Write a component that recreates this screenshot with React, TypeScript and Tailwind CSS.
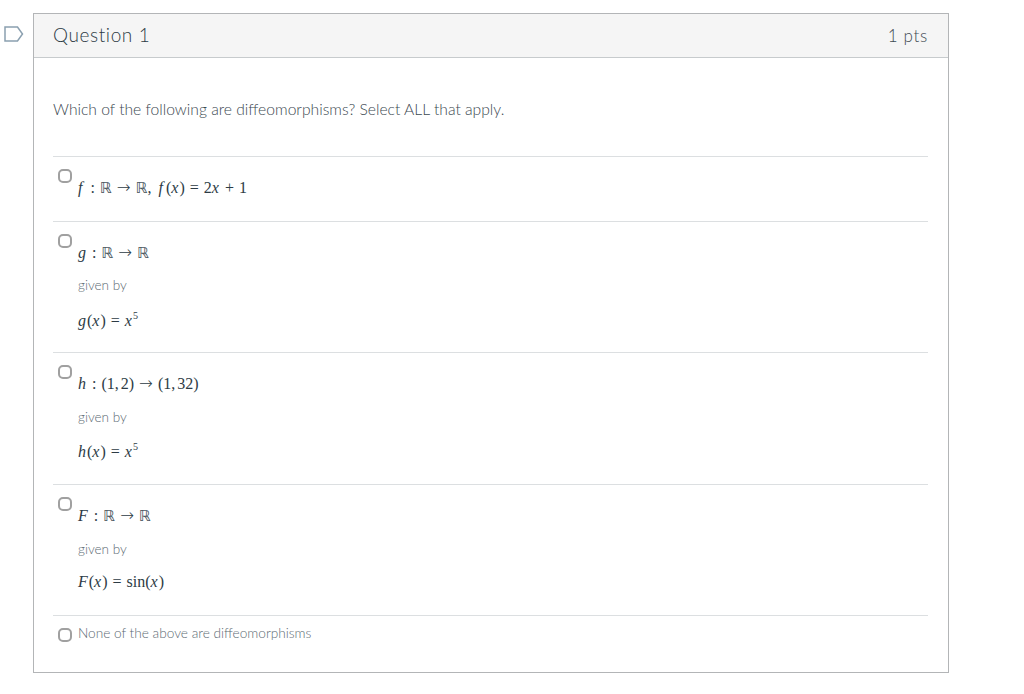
import React from "react";

const serif = "font-['Liberation_Serif',serif] text-[16px] leading-[18px] text-[#2d3b45] whitespace-pre";

function Box({ className }: { className: string }) {
  return <span className={"block w-[14px] h-[14px] shrink-0 rounded-[5px] border-2 border-[#a0a0a0] bg-white " + className} />;
}

function I({ children }: { children: React.ReactNode }) {
  return <i className="mr-[1px]">{children}</i>;
}

// relation with thick math spacing either side
function Rel({ children }: { children: React.ReactNode }) {
  return <span className="mx-[5px]">{children}</span>;
}

function Arrow() {
  return <span className="mx-[5px] font-['DejaVu_Sans',sans-serif] text-[16.5px] font-light">→</span>;
}

function Reals() {
  return <span className="font-['DejaVu_Sans',sans-serif] text-[15px] text-[#4a565e]">ℝ</span>;
}

function Comma() {
  return <span className="mr-[2px]">,</span>;
}

function Sup() {
  return <sup className="text-[10px] leading-none relative -top-[1px] align-super">5</sup>;
}

function Choice({
  first,
  rest,
  h,
  givenGap = "mt-[14px]",
  restGap = "mt-[16px]",
}: {
  first: React.ReactNode;
  rest?: React.ReactNode;
  h: string;
  givenGap?: string;
  restGap?: string;
}) {
  return (
    <div className={"border-t border-[#dcdfe1] pl-[5px] pt-[12px] flex " + h}>
      <Box className="mt-0" />
      <div className="ml-[6px] pt-[10px]">
        <div className={serif}>{first}</div>
        {rest && (
          <>
            <p className={"text-[13.5px] leading-[18px] font-light text-[#5c6a73] " + givenGap}>given by</p>
            <div className={serif + " " + restGap}>{rest}</div>
          </>
        )}
      </div>
    </div>
  );
}

export default function App() {
  return (
    <div className="w-[1024px] h-[694px] bg-white pt-[13px] flex font-['Lato',sans-serif] overflow-hidden">
      <div className="w-[33px] shrink-0 pt-[13px] pl-[4px]">
        <svg width="20" height="16" viewBox="0 0 20 16" fill="none" stroke="#8ba0b0" strokeWidth="1.5">
          <path d="M1 1h12.5l5 7-5 7H1z" />
        </svg>
      </div>
      <div className="w-[916px] h-[660px] border border-[#b3b5b7]">
        <div className="h-[44px] bg-[#f5f5f5] border-b border-[#c7cbcd] flex items-center justify-between pl-[19px] pr-[20px]">
          <h2 className="text-[19px] font-light tracking-[0.6px] text-[#2d3b45]">Question 1</h2>
          <span className="text-[17px] font-light tracking-[0.7px] text-[#3f4b53]">1 pts</span>
        </div>
        <div className="pl-[19px] pr-[20px]">
          <p className="text-[15.66px] leading-[20px] font-light text-[#3b4850] pt-[41px] pb-[37px]">
            Which of the following are diffeomorphisms? Select ALL that apply.
          </p>
          <Choice
            h="h-[65px]"
            first={
              <>
                <i className="mr-[3px]">f</i>
                <Rel>:</Rel>
                <Reals />
                <Arrow />
                <Reals />
                <span className="mr-[7px]">,</span>
                <i className="mr-[3px]">f</i>(<I>x</I>)<Rel>=</Rel>2<I>x</I>
                <Rel>+</Rel>1
              </>
            }
          />
          <Choice
            h="h-[131px]"
            restGap="mt-[18px]"
            first={
              <>
                <I>g</I>
                <Rel>:</Rel>
                <Reals />
                <Arrow />
                <Reals />
              </>
            }
            rest={
              <>
                <I>g</I>(<I>x</I>)<Rel>=</Rel>
                <I>x</I>
                <Sup />
              </>
            }
          />
          <Choice
            h="h-[132px]"
            givenGap="mt-[15px]"
            restGap="mt-[17px]"
            first={
              <>
                <I>h</I>
                <Rel>:</Rel>(1
                <Comma />
                2)
                <Arrow />
                (1
                <Comma />
                32)
              </>
            }
            rest={
              <>
                <I>h</I>(<I>x</I>)<Rel>=</Rel>
                <I>x</I>
                <Sup />
              </>
            }
          />
          <Choice
            h="h-[131px]"
            givenGap="mt-[15px]"
            restGap="mt-[15px]"
            first={
              <>
                <I>F</I>
                <Rel>:</Rel>
                <Reals />
                <Arrow />
                <Reals />
              </>
            }
            rest={
              <>
                <I>F</I>(<I>x</I>)<Rel>=</Rel>sin(<I>x</I>)
              </>
            }
          />
          <div className="border-t border-[#dcdfe1] pl-[5px] pt-[12px] flex items-start">
            <Box className="rounded-[4px]" />
            <span className="ml-[6px] -mt-[1px] text-[13.65px] leading-[12px] font-light text-[#5c6a73]">
              None of the above are diffeomorphisms
            </span>
          </div>
        </div>
      </div>
    </div>
  );
}
